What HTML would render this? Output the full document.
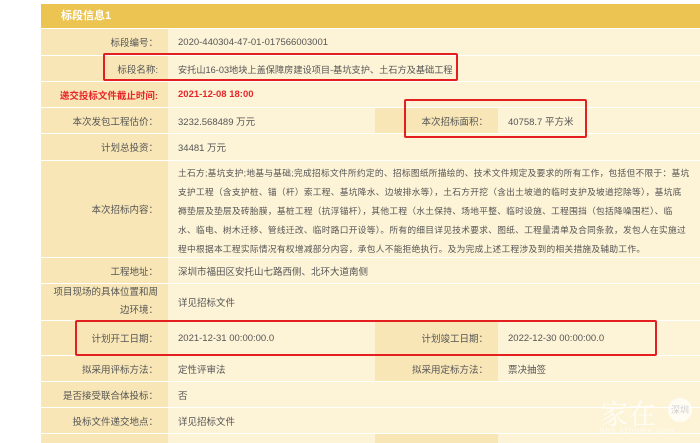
<!DOCTYPE html>
<html><head><meta charset="utf-8"><style>
*{margin:0;padding:0;box-sizing:border-box}
body{width:700px;height:438px;background:#fff;position:relative;overflow:hidden;font-family:"Liberation Sans","Noto Sans CJK SC",sans-serif;font-size:9.5px;color:#555}
.hd{position:absolute;left:41px;top:4px;width:659px;height:24px;background:#ecc451;color:#fff;font-weight:bold;font-size:11px;line-height:24px;padding-left:20px}
.r{position:absolute;left:41px;width:659px;background:#fdf3d6;border-top:1px solid #fff}
.l{position:absolute;left:0;top:0;bottom:0;width:127px;background:#f8e6b6;text-align:right;padding-right:10px;display:flex;align-items:center;justify-content:flex-end}
.v{position:absolute;left:137px;top:0;bottom:0;display:flex;align-items:center;white-space:nowrap}
.l2{position:absolute;left:334px;top:0;bottom:0;width:123px;background:#f8e6b6;display:flex;align-items:center;justify-content:flex-end;padding-right:10px}
.v2{position:absolute;left:467px;top:0;bottom:0;display:flex;align-items:center}
.red{color:#e8262a;font-weight:bold}
.box{position:absolute;border:2px solid #e3201f;border-radius:2px}
.txt{position:absolute;left:137px;top:3px;width:540px;line-height:19px;white-space:nowrap;font-size:8.7px;letter-spacing:0.3px}
</style></head><body>
<div class="hd">标段信息1</div>
<div class="r" style="top:28px;height:27px"><div class="l">标段编号：</div><div class="v">2020-440304-47-01-017566003001</div></div>
<div class="r" style="top:55px;height:26px"><div class="l">标段名称:</div><div class="v" style="font-size:9.2px">安托山16-03地块上盖保障房建设项目-基坑支护、土石方及基础工程</div></div>
<div class="r" style="top:81px;height:26px"><div class="l red">递交投标文件截止时间:</div><div class="v red">2021-12-08 18:00</div></div>
<div class="r" style="top:107px;height:26px"><div class="l">本次发包工程估价：</div><div class="v">3232.568489 万元</div><div class="l2">本次招标面积：</div><div class="v2">40758.7 平方米</div></div>
<div class="r" style="top:133px;height:27px"><div class="l">计划总投资：</div><div class="v">34481 万元</div></div>
<div class="r" style="top:160px;height:97px"><div class="l">本次招标内容：</div><div class="txt">土石方;基坑支护;地基与基础;完成招标文件所约定的、招标图纸所描绘的、技术文件规定及要求的所有工作，包括但不限于：基坑<br>支护工程（含支护桩、锚（杆）索工程、基坑降水、边坡排水等），土石方开挖（含出土坡道的临时支护及坡道挖除等），基坑底<br>褥垫层及垫层及砖胎膜，基桩工程（抗浮锚杆），其他工程（水土保持、场地平整、临时设施、工程围挡（包括降噪围栏）、临<br>水、临电、树木迁移、管线迁改、临时路口开设等）。所有的细目详见技术要求、图纸、工程量清单及合同条款，发包人在实施过<br>程中根据本工程实际情况有权增减部分内容，承包人不能拒绝执行。及为完成上述工程涉及到的相关措施及辅助工作。</div></div>
<div class="r" style="top:257px;height:26px"><div class="l">工程地址：</div><div class="v">深圳市福田区安托山七路西侧、北环大道南侧</div></div>
<div class="r" style="top:283px;height:37px"><div class="l" style="line-height:18px">项目现场的具体位置和周<br>边环境：</div><div class="v">详见招标文件</div></div>
<div class="r" style="top:320px;height:35px"><div class="l">计划开工日期：</div><div class="v">2021-12-31 00:00:00.0</div><div class="l2">计划竣工日期：</div><div class="v2">2022-12-30 00:00:00.0</div></div>
<div class="r" style="top:355px;height:26px"><div class="l">拟采用评标方法：</div><div class="v">定性评审法</div><div class="l2">拟采用定标方法：</div><div class="v2">票决抽签</div></div>
<div class="r" style="top:381px;height:26px"><div class="l">是否接受联合体投标：</div><div class="v">否</div></div>
<div class="r" style="top:407px;height:26px"><div class="l">投标文件递交地点：</div><div class="v">详见招标文件</div></div>
<div class="r" style="top:433px;height:10px"><div class="l"></div><div class="l2"></div></div>
<div class="box" style="left:103px;top:53px;width:355px;height:28px"></div>
<div class="box" style="left:404px;top:99px;width:183px;height:39px"></div>
<div class="box" style="left:75px;top:320px;width:582px;height:36px"></div>
<div style="position:absolute;left:600px;top:393px;color:rgba(255,255,255,.8);font-size:28px;font-family:'Noto Serif CJK SC',serif">家在</div>
<div style="position:absolute;left:668px;top:398px;width:24px;height:24px;border-radius:50%;background:rgba(255,255,255,.7);color:#ccc;font-size:9px;line-height:24px;text-align:center">深圳</div>
<div style="position:absolute;left:600px;top:426px;color:rgba(255,255,255,.7);font-size:8px;letter-spacing:1px">bbs.szhome.com</div>
</body></html>
